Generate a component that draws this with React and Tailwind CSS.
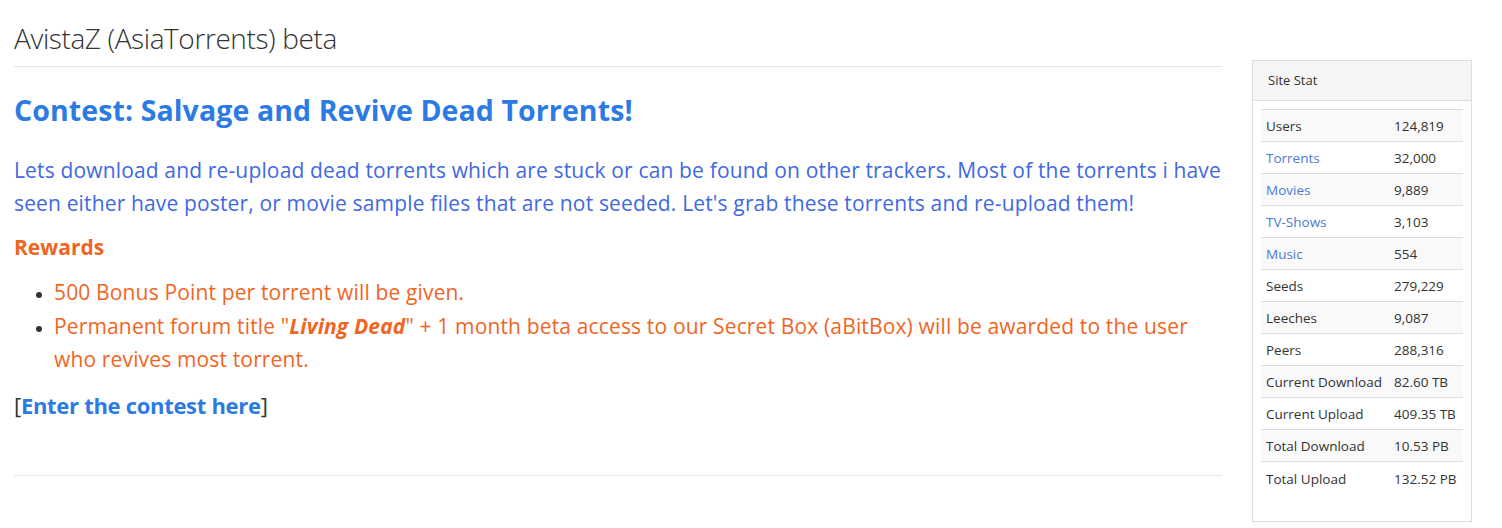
import React from "react";

const stats = [
  ["Users", "124,819", false],
  ["Torrents", "32,000", true],
  ["Movies", "9,889", true],
  ["TV-Shows", "3,103", true],
  ["Music", "554", true],
  ["Seeds", "279,229", false],
  ["Leeches", "9,087", false],
  ["Peers", "288,316", false],
  ["Current Download", "82.60 TB", false],
  ["Current Upload", "409.35 TB", false],
  ["Total Download", "10.53 PB", false],
  ["Total Upload", "132.52 PB", false],
];

export default function App() {
  return (
    <div className="w-[1502px] h-[528px] bg-white overflow-hidden font-['Open_Sans','Liberation_Sans',sans-serif] text-[#333]">
      <div className="flex pl-[14px] pr-[30px] gap-[30px]">
        <div className="w-[1208px]">
          <h1 className="text-[28px] font-light leading-[34px] pt-[21px] pb-[11px] border-b border-[#e5e5e5] text-[#333] tracking-[-0.4px]">
            AvistaZ (AsiaTorrents) beta
          </h1>
          <div className="flex flex-col border-b border-[#e5e5e5] h-[409px]">
            <h2 className="mt-[25px] text-[28.5px] font-bold leading-[36px] text-[#2c7be5] tracking-[0.1px]">
              Contest: Salvage and Revive Dead Torrents!
            </h2>
            <p className="mt-[26px] text-[21px] leading-[33px] text-[#4169e1] tracking-[0.15px]">
              Lets download and re-upload dead torrents which are stuck or can be found on other trackers. Most of the torrents i have seen either have poster, or movie sample files that are not seeded. Let's grab these torrents and re-upload them!
            </p>
            <div className="mt-[11px] text-[21px] font-bold leading-[32px] text-[#f0651f]">Rewards</div>
            <ul className="mt-[13px] pl-[40px] list-disc text-[21px] leading-[33.5px] text-[#f0651f] tracking-[0.15px]">
              <li className="marker:text-[#333] marker:text-[16px]">500 Bonus Point per torrent will be given.</li>
              <li className="marker:text-[#333] marker:text-[16px]">
                Permanent forum title "<b><i>Living Dead</i></b>" + 1 month beta access to our Secret Box (aBitBox) will be awarded to the user who revives most torrent.
              </li>
            </ul>
            <div className="mt-[12px] text-[22px] leading-[32px] tracking-[-0.3px]">
              [<a className="font-bold text-[#2c7be5]">Enter the contest here</a>]
            </div>
          </div>
        </div>
        <div className="w-[220px] mt-[60px]">
          <div className="border border-[#ddd] h-[462px]">
            <div className="bg-[#f5f5f5] border-b border-[#ddd] h-[40px] px-[15px] flex items-center text-[13px] text-[#333]">
              Site Stat
            </div>
            <div className="px-[8px] pt-[8px]">
              <table className="w-full text-[13.5px] border-collapse">
                <tbody>
                  {stats.map(([k, v, link], i) => (
                    <tr key={k} className={i % 2 === 0 ? "bg-[#f9f9f9]" : ""}>
                      <td className="border-t border-[#ddd] h-[32px] px-[5px] w-[133px] pt-[2px] whitespace-nowrap">
                        <span className={link ? "text-[#4a7bd0]" : "text-[#333]"}>{k}</span>
                      </td>
                      <td className="border-t border-[#ddd] h-[32px] px-[0px] pt-[2px] whitespace-nowrap">{v}</td>
                    </tr>
                  ))}
                </tbody>
              </table>
            </div>
          </div>
        </div>
      </div>
    </div>
  );
}
